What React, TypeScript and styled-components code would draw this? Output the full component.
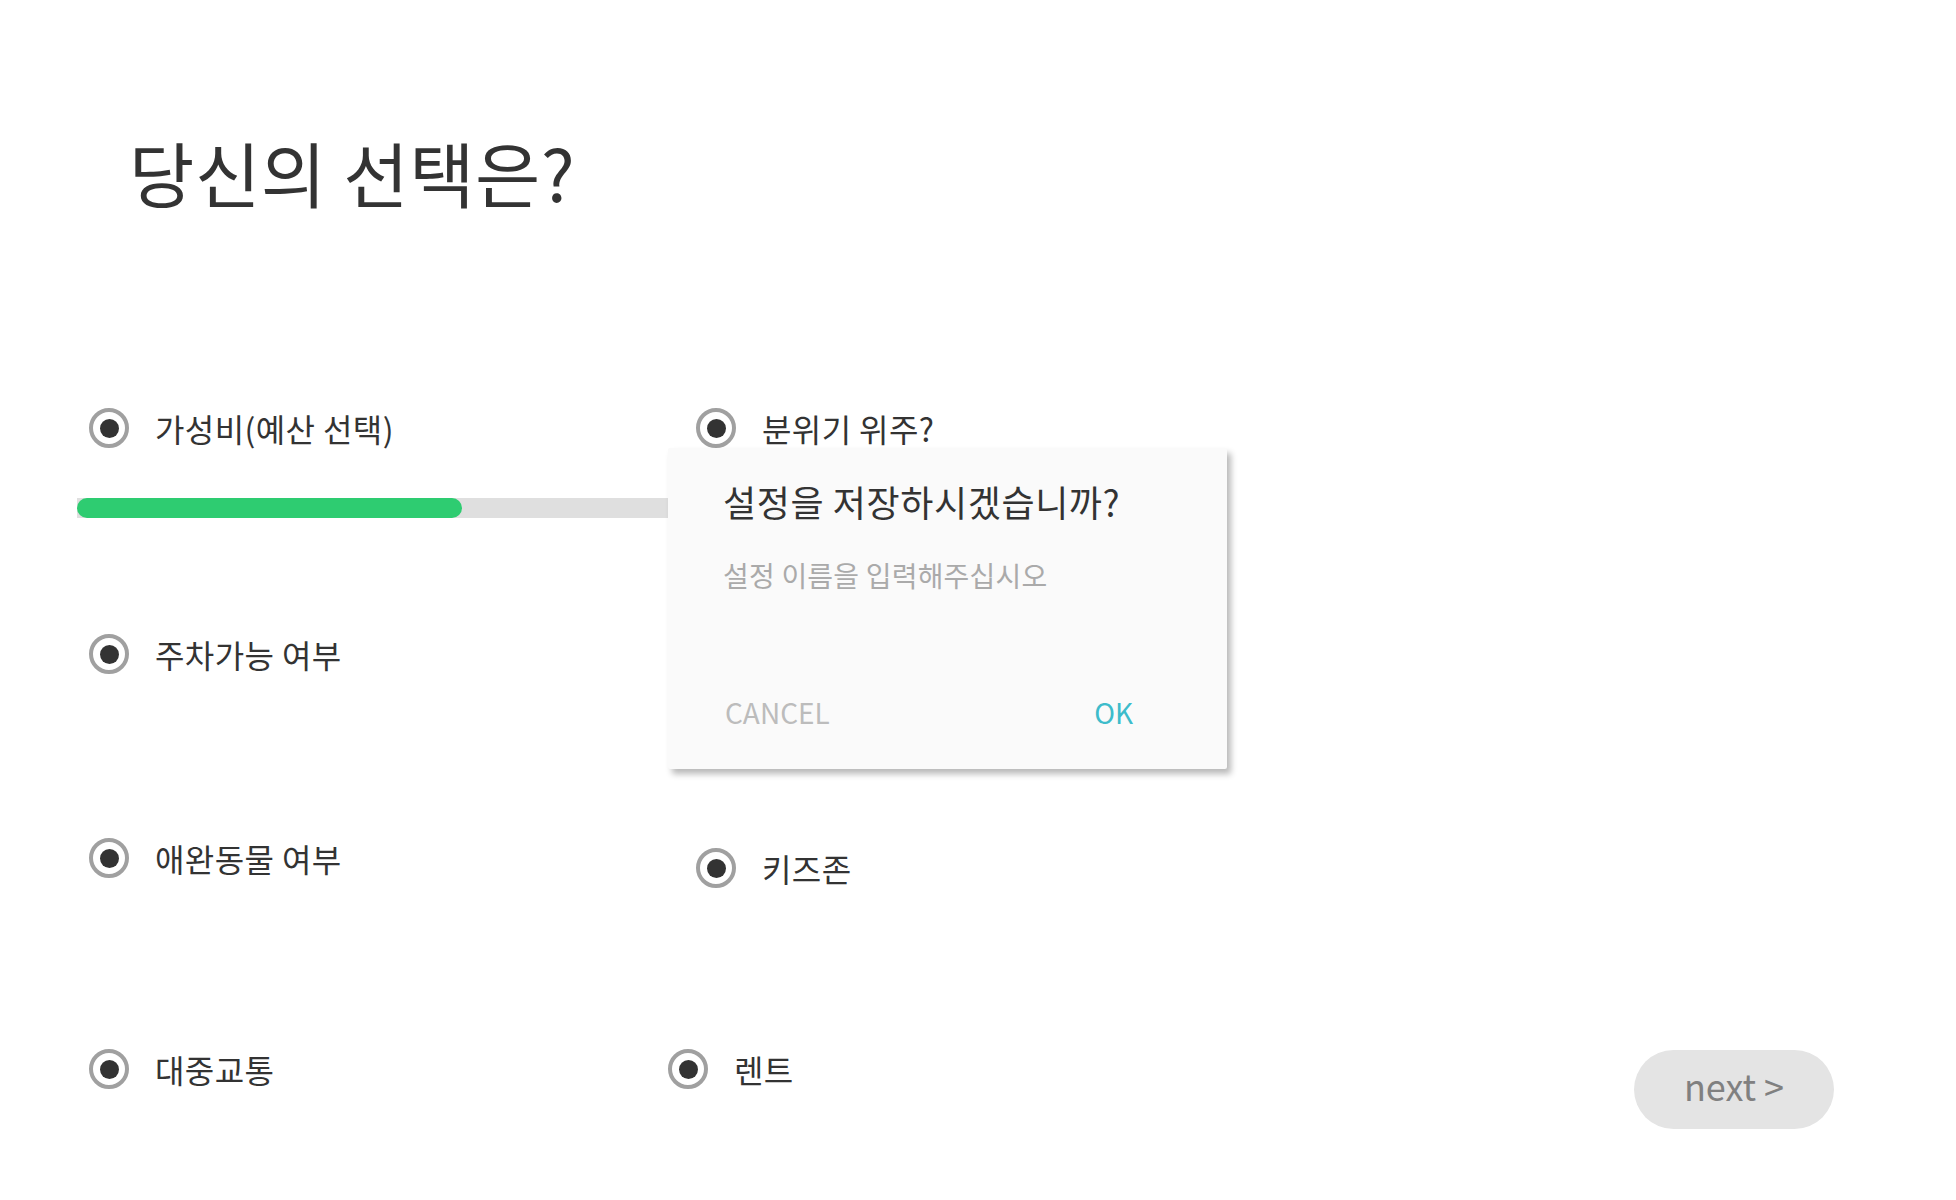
import React from "react";
import styled, { createGlobalStyle } from "styled-components";

const GlobalStyle = createGlobalStyle`
  html, body {
    margin: 0;
    padding: 0;
    background: #ffffff;
  }
  body {
    font-family: "Noto Sans CJK KR", "Noto Sans", sans-serif;
    color: #333333;
  }
`;

const Page = styled.div`
  position: relative;
  width: 1956px;
  height: 1200px;
  overflow: hidden;
  background: #ffffff;
`;

const Title = styled.h1`
  margin: 131px 0 0 129px;
  font-size: 71px;
  font-weight: 400;
  line-height: 80px;
  height: 80px;
  letter-spacing: 0.6px;
  color: #333333;
`;

const Row = styled.div<{ $top: number; $height?: number }>`
  display: flex;
  align-items: flex-start;
  margin-top: ${(p) => p.$top}px;
  padding-left: 89px;
  height: ${(p) => p.$height ?? 60}px;
`;

const Option = styled.label<{ $width?: number; $shift?: number }>`
  display: flex;
  align-items: center;
  gap: 26px;
  height: 60px;
  width: ${(p) => (p.$width ? `${p.$width}px` : "auto")};
  margin-top: ${(p) => p.$shift ?? 0}px;
  flex-shrink: 0;
  cursor: pointer;
`;

const Radio = styled.span`
  box-sizing: border-box;
  width: 40px;
  height: 40px;
  border-radius: 50%;
  border: 4px solid #a0a0a0;
  display: flex;
  align-items: center;
  justify-content: center;
  background: #ffffff;
  &::after {
    content: "";
    width: 19px;
    height: 19px;
    border-radius: 50%;
    background: #333333;
  }
`;

const Label = styled.span`
  font-size: 32px;
  line-height: 40px;
  letter-spacing: 0.4px;
  color: #333333;
`;

const Track = styled.div`
  margin: 40px 0 0 77px;
  width: 930px;
  height: 20px;
  background: #dfdfdf;
  display: flex;
`;

const Fill = styled.div`
  height: 100%;
  background: #2ecc71;
  border-radius: 10px;
`;

const Spacer = styled.div`
  flex: 1;
`;

const NextButton = styled.button`
  margin: 11px 122px 0 0;
  width: 200px;
  height: 79px;
  border: none;
  border-radius: 40px;
  background: #e4e4e4;
  color: #808080;
  font-family: "Noto Sans CJK KR", "Noto Sans", sans-serif;
  font-size: 36px;
  line-height: 1;
  padding: 0 0 9px 0;
  cursor: pointer;
`;

const Dialog = styled.div`
  position: absolute;
  left: 668px;
  top: 448px;
  width: 559px;
  height: 321px;
  box-sizing: border-box;
  background: #fafafa;
  border-radius: 2px;
  box-shadow: 4px 5px 6px rgba(0, 0, 0, 0.28);
  display: flex;
  flex-direction: column;
  padding: 29px 0 0 55px;
`;

const DialogTitle = styled.div`
  font-size: 36px;
  line-height: 48px;
  letter-spacing: 0.6px;
  color: #333333;
`;

const DialogInput = styled.div`
  margin-top: 30px;
  font-size: 28px;
  line-height: 40px;
  letter-spacing: 0.2px;
  color: #aaaaaa;
`;

const DialogActions = styled.div`
  margin-top: 97px;
  display: flex;
  justify-content: space-between;
  padding: 0 94px 0 2px;
`;

const ActionButton = styled.span<{ $primary?: boolean }>`
  font-size: 28px;
  line-height: 40px;
  color: ${(p) => (p.$primary ? "#3dbccb" : "#bcbcbc")};
  cursor: pointer;
`;

const Choice = ({ label, width, shift }: { label: string; width?: number; shift?: number }) => (
  <Option $width={width} $shift={shift}>
    <Radio />
    <Label>{label}</Label>
  </Option>
);

export default function App() {
  const progress = 385;
  return (
    <>
      <GlobalStyle />
      <Page>
        <Title>당신의 선택은?</Title>

        <Row $top={187}>
          <Choice label="가성비(예산 선택)" width={607} />
          <Choice label="분위기 위주?" />
        </Row>
        <Track>
          <Fill style={{ width: progress }} />
        </Track>

        <Row $top={106}>
          <Choice label="주차가능 여부" width={607} />
        </Row>

        <Row $top={144} $height={70}>
          <Choice label="애완동물 여부" width={607} />
          <Choice label="키즈존" shift={10} />
        </Row>

        <Row $top={141} $height={90}>
          <Choice label="대중교통" width={579} />
          <Choice label="렌트" />
          <Spacer />
          <NextButton>next &gt;</NextButton>
        </Row>

        <Dialog>
          <DialogTitle>설정을 저장하시겠습니까?</DialogTitle>
          <DialogInput>설정 이름을 입력해주십시오</DialogInput>
          <DialogActions>
            <ActionButton>CANCEL</ActionButton>
            <ActionButton $primary>OK</ActionButton>
          </DialogActions>
        </Dialog>
      </Page>
    </>
  );
}
